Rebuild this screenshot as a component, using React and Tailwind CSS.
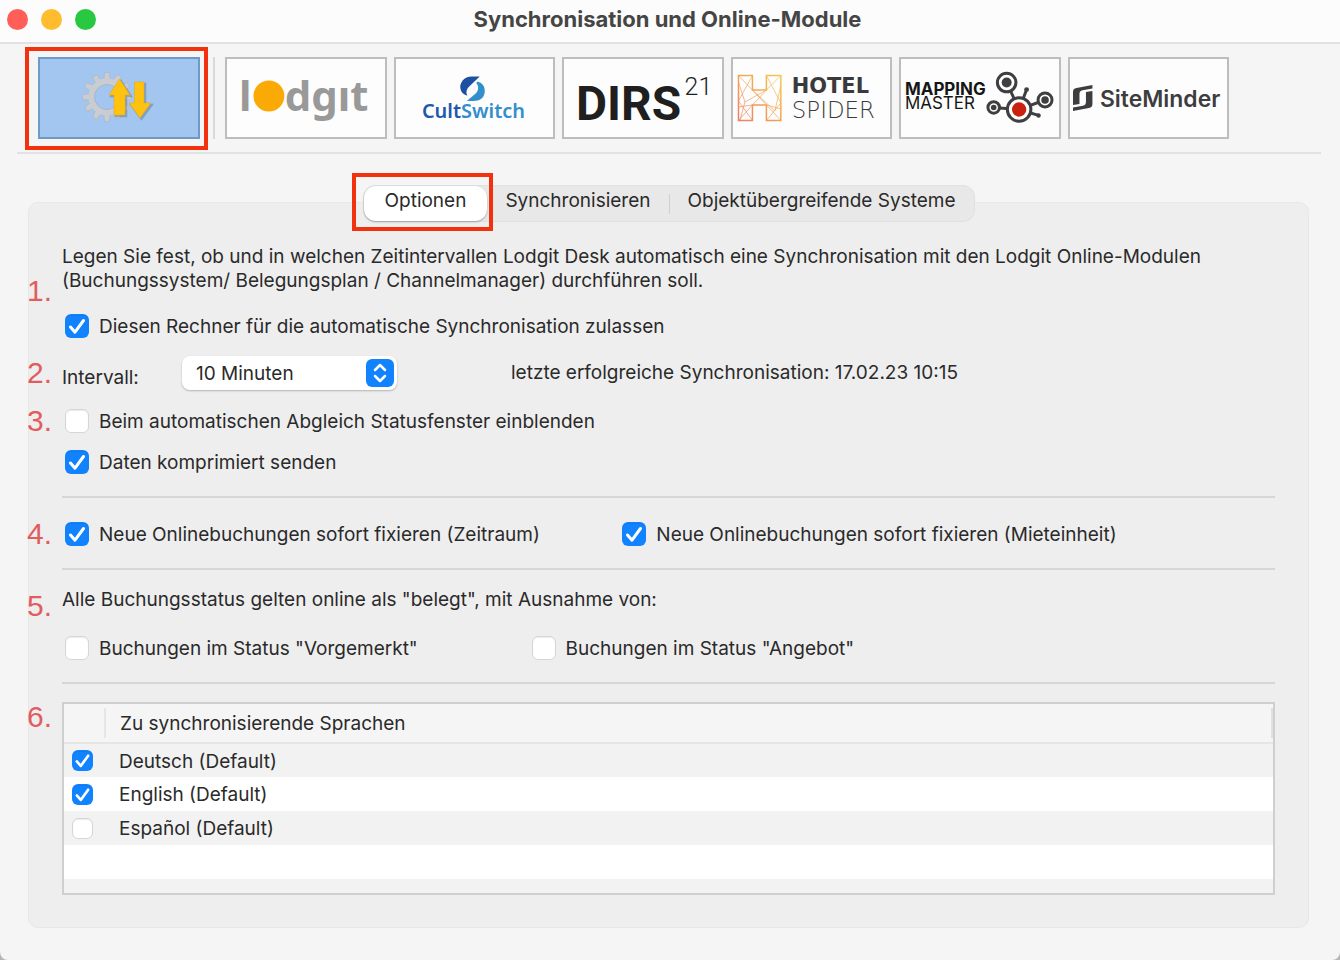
// Sync settings window: module toolbar, tab bar and the "Optionen" panel

import { useState } from 'react';

const LANGUAGES = [
  { id: 'de', name: 'Deutsch (Default)', active: true },
  { id: 'en', name: 'English (Default)', active: true },
  { id: 'es', name: 'Español (Default)', active: false },
];

const TABS = ['Optionen', 'Synchronisieren', 'Objektübergreifende Systeme'];

// Logos share one box, inside the 2px tile border
function Logo({ label, children }) {
  return (
    <svg viewBox="2 2 158 78" className="block h-full w-full" role="img" aria-label={label}>
      {children}
    </svg>
  );
}

function SyncLogo() {
  const teeth = [0, 30, 60, 90, 120, 150, 180, 210, 240, 270, 300, 330];
  const arrows = (
    <>
      <path d="M81.500 22 L92 38 H87 V58 H76 V38 H71 Z" />
      <path d="M96.500 25 H106 V46 H113 L102 61 L91 46 H96.500 Z" />
    </>
  );
  return (
    <Logo label="Synchronisation">
      <g fill="#c9ccd0" stroke="#a9b4c2" strokeWidth="0.6">
        {teeth.map((deg) => (
          <path key={deg} d="M65.800 23 L66.500 15.500 H71.500 L72.200 23 Z" transform={`rotate(${deg} 69 40)`} />
        ))}
      </g>
      <circle cx="69" cy="40" r="15.500" fill="none" stroke="#c9ccd0" strokeWidth="6" />
      <circle cx="69" cy="40" r="12.500" fill="none" stroke="#a3b1c4" strokeWidth="0.800" />
      <g fill="#4b5a6c" opacity="0.35" transform="translate(1.500 1.500)" stroke="#4b5a6c" strokeWidth="1.500">{arrows}</g>
      <g fill="#ffc20e" stroke="#e0a414" strokeWidth="0.500">{arrows}</g>
    </Logo>
  );
}

function LodgitLogo() {
  return (
    <Logo label="lodgit">
      <g fill="#999999" fontFamily="'Noto Sans', sans-serif" fontWeight="700" fontSize="42">
        <text x="14" y="54">l</text>
        <text x="60" y="54">dgıt</text>
      </g>
      <circle cx="44" cy="39" r="15.500" fill="#fba905" />
    </Logo>
  );
}

function CultSwitchLogo() {
  return (
    <Logo label="CultSwitch">
      <path d="M86 19.500 H78 C70 19.500 66 26 66.500 31 C67 35 69.500 37.500 73.500 38.800 C71.500 34 73.500 31 77 28 Z" fill="#1d4fa3" />
      <path d="M84 24.500 C89 26 91.500 30 91 35 C90.500 41 86 44 80 44 H73 L79 39 C84 35.500 86.500 31 82.500 26 Z" fill="#338fcb" />
      <text x="28" y="61" fontFamily="'Noto Sans', sans-serif" fontWeight="600" fontSize="20">
        <tspan fill="#2058ad">Cult</tspan>
        <tspan fill="#338fcb">Switch</tspan>
      </text>
    </Logo>
  );
}

function DirsLogo() {
  return (
    <Logo label="DIRS21">
      <g fill="#1f1f1f" fontFamily="Roboto, sans-serif">
        <text x="14" y="63" fontWeight="700" fontSize="48">DIRS</text>
        <text x="123" y="38" fontWeight="300" fontSize="25">21</text>
      </g>
    </Logo>
  );
}

function HotelSpiderLogo() {
  return (
    <Logo label="Hotel Spider">
      <defs>
        <linearGradient id="spider" x1="0" y1="1" x2="1" y2="0">
          <stop offset="0" stopColor="#ee7f63" />
          <stop offset="1" stopColor="#f5c84c" />
        </linearGradient>
      </defs>
      <g fill="none" stroke="url(#spider)">
        <path d="M7.500 18.500 H21.500 V33 H35.500 V18.500 H50 V63.500 H35.500 V48 H21.500 V63.500 H7.500 Z" strokeWidth="1.500" />
        <path
          d="M7.500 18.500 L21.500 33 L35.500 48 L50 63.500 M50 18.500 L35.500 33 L21.500 48 L7.500 63.500 M21.500 18.500 L7.500 44 L21.500 63.500 M35.500 18.500 L50 46 L35.500 63.500 M7.500 25 L14 45 L35.500 33 M21.500 33 L44 54 L50 28 M7.500 50 L21.500 48 M35.500 48 L50 52 M14 45 L9 63.500"
          strokeWidth="0.700"
        />
      </g>
      <g fill="#3a3a3c" fontFamily="'DejaVu Sans', sans-serif">
        <text x="61" y="36" fontWeight="700" fontSize="21">HOTEL</text>
        <text x="61" y="61" fontWeight="200" fontSize="23">SPIDER</text>
      </g>
    </Logo>
  );
}

function MappingMasterLogo() {
  return (
    <Logo label="Mapping Master">
      <g fill="#161616" fontFamily="Inter, sans-serif" fontSize="17">
        <text x="6" y="38" fontWeight="700">MAPPING</text>
        <text x="6" y="52">MASTER</text>
      </g>
      <g transform="translate(1 0)">
        <g stroke="#3f3f41" strokeWidth="3">
          <path d="M119.500 52.500 L107 25.500 M119.500 52.500 L145.500 43 M119.500 52.500 L94 50.500 M119.500 52.500 L127 32.500 M119.500 52.500 L139 58.500" />
          <circle cx="107" cy="25.500" r="9.300" fill="#fff" />
          <circle cx="145.500" cy="43" r="7" fill="#fff" />
          <circle cx="94" cy="50.500" r="5.800" fill="#fff" />
          <circle cx="119.500" cy="52.500" r="11.800" fill="#fff" />
        </g>
        <g fill="#3f3f41">
          <circle cx="107" cy="25.500" r="5" />
          <circle cx="145.500" cy="43" r="3.800" />
          <circle cx="94" cy="50.500" r="2.800" />
          <circle cx="127" cy="32.500" r="2.400" />
          <circle cx="139" cy="58.500" r="2.200" />
        </g>
        <circle cx="119.500" cy="52.500" r="7.200" fill="#c9210f" />
      </g>
    </Logo>
  );
}

function SiteMinderLogo() {
  const half = 'M5 48 V35 Q5 31.500 8.500 31 L24.500 28 V31.500 L14.500 33.300 Q11.500 34 11.500 37 V47 Z';
  return (
    <Logo label="SiteMinder">
      <g fill="#3d3d3f">
        <path d={half} />
        <path d={half} transform="rotate(180 14.75 41)" />
        <text x="32" y="50" fontFamily="Inter, sans-serif" fontWeight="600" fontSize="23">SiteMinder</text>
      </g>
    </Logo>
  );
}

const MODULES = [LodgitLogo, CultSwitchLogo, DirsLogo, HotelSpiderLogo, MappingMasterLogo, SiteMinderLogo];

// Red number that hangs in the margin, left of its row
function Marker({ children }) {
  return (
    <span className="absolute top-1/2 -left-[35px] -translate-y-1/2 font-['Liberation_Sans',sans-serif] text-[30px] leading-[30px] text-[#e25c5f]">
      {children}
    </span>
  );
}

function Check({ id, defaultChecked, small }) {
  return (
    <span className={`relative block shrink-0 ${small ? 'size-[21px]' : 'size-6'}`}>
      <input
        id={id}
        type="checkbox"
        defaultChecked={defaultChecked}
        className="peer block size-full appearance-none rounded-md border border-[#d6d6d6] bg-white shadow-[inset_0_1px_1px_rgba(0,0,0,0.08)] checked:border-transparent checked:bg-[#1283ff]"
      />
      <svg viewBox="0 0 24 24" className="pointer-events-none absolute inset-0 hidden size-full peer-checked:block" aria-hidden="true">
        <path d="M5.500 13 L10 18.200 L18.500 6.500" fill="none" stroke="#fff" strokeWidth="3" strokeLinecap="round" strokeLinejoin="round" />
      </svg>
    </span>
  );
}

function CheckRow({ id, defaultChecked, children }) {
  return (
    <div className="flex h-6 items-center gap-[10px] pl-[3px]">
      <Check id={id} defaultChecked={defaultChecked} />
      <label htmlFor={id} className="pt-0.5">{children}</label>
    </div>
  );
}

export default function App() {
  const [tab, setTab] = useState(TABS[0]);

  return (
    <div className="min-h-screen bg-[#b5b5b5] font-[Inter,sans-serif] text-[19px] leading-6 text-[#2a2a2a]">
      <div className="min-h-screen rounded-b-lg bg-[#f5f5f5]">
        {/* Title bar */}
        <header className="grid h-11 grid-cols-[1fr_auto_1fr] items-center border-b-2 border-[#e2e2e2] bg-[#fcfcfc] pr-[5px] pb-1">
          <div className="flex gap-[13px] pl-[7px]">
            <button type="button" aria-label="Schließen" className="size-[21px] rounded-full bg-[#ff5f57]" />
            <button type="button" aria-label="Minimieren" className="size-[21px] rounded-full bg-[#febc2e]" />
            <button type="button" aria-label="Maximieren" className="size-[21px] rounded-full bg-[#28c840]" />
          </div>
          <h1 className="text-[22px] font-bold text-[#454545]">Synchronisation und Online-Module</h1>
        </header>

        {/* Modules */}
        <nav className="mr-[19px] ml-[17px] flex border-b-2 border-[#e2e2e2] pt-[13px] pr-[92px] pb-[13px] pl-[21px]">
          <div className="relative mr-[13px] h-[82px] w-[162px] shrink-0">
            <button type="button" className="block h-full w-full border-2 border-[#6f9ac8] bg-[#a2c6ef]">
              <SyncLogo />
            </button>
            <span className="pointer-events-none absolute -top-[10px] -right-2 -bottom-[11px] -left-[13px] border-4 border-[#f2320e]" />
          </div>
          <div className="grid flex-1 grid-cols-6 gap-[7px] border-l-2 border-[#d9d9d9] pl-[10px]">
            {MODULES.map((Module, i) => (
              <button key={i} type="button" className="h-[82px] border-2 border-[#bdbdbd] bg-[#fdfdfd]">
                <Module />
              </button>
            ))}
          </div>
        </nav>

        <main className="pt-[31px] pr-[31px] pb-8 pl-7">
          {/* Tabs */}
          <div className="relative z-10 mx-auto flex h-[37px] w-fit rounded-xl border border-[#e0e0e0] bg-[#e8e8e8]" role="tablist">
            {TABS.map((name, i) => (
              <div key={name} className="relative flex items-center">
                {i === 2 && <span className="h-5 w-px bg-[#cfcfcf]" />}
                <button
                  type="button"
                  role="tab"
                  aria-selected={tab === name}
                  onClick={() => setTab(name)}
                  className={`h-full pb-[5px] ${i === 0 ? 'px-[21px]' : 'px-[18px]'} ${
                    tab === name ? 'rounded-xl bg-white shadow-[0_1px_2px_rgba(0,0,0,0.3)]' : ''
                  }`}
                >
                  {name}
                </button>
                {i === 0 && (
                  <span className="pointer-events-none absolute -top-[13px] -right-[6px] -bottom-[10px] -left-3 border-4 border-[#f2320e]" />
                )}
              </div>
            ))}
          </div>

          {/* Options */}
          <section className="-mt-5 rounded-[10px] border border-[#e7e7e7] bg-[#eeeeee] px-[33px] pt-[42px] pb-8">
            <p>
              Legen Sie fest, ob und in welchen Zeitintervallen Lodgit Desk automatisch eine Synchronisation mit den Lodgit Online-Modulen
              (Buchungssystem/ Belegungsplan / Channelmanager) durchführen soll.
            </p>

            <div className="relative">
              <span className="absolute -top-0.5 left-0"><Marker>1.</Marker></span>
              <div className="pt-[21px]">
                <CheckRow id="auto" defaultChecked>Diesen Rechner für die automatische Synchronisation zulassen</CheckRow>
              </div>
            </div>

            <div className="relative mt-[18px] flex items-center">
              <Marker>2.</Marker>
              <label htmlFor="interval" className="w-[120px] self-end">Intervall:</label>
              <div className="relative w-[215px]">
                <select
                  id="interval"
                  defaultValue="10"
                  className="block h-[34px] w-full appearance-none rounded-lg bg-white pt-0.5 pl-[14px] shadow-[0_1px_2px_rgba(0,0,0,0.25)]"
                >
                  <option value="5">5 Minuten</option>
                  <option value="10">10 Minuten</option>
                  <option value="30">30 Minuten</option>
                </select>
                <svg viewBox="0 0 28 28" className="pointer-events-none absolute top-[3px] right-[3px] size-7" aria-hidden="true">
                  <rect width="28" height="28" rx="6" fill="#1283ff" />
                  <path d="M9 11 L14 6 L19 11 M9 17 L14 22 L19 17" fill="none" stroke="#fff" strokeWidth="2.500" strokeLinecap="round" strokeLinejoin="round" />
                </svg>
              </div>
              <p className="ml-[114px]">letzte erfolgreiche Synchronisation: 17.02.23 10:15</p>
            </div>

            <div className="relative mt-[19px]">
              <Marker>3.</Marker>
              <CheckRow id="status">Beim automatischen Abgleich Statusfenster einblenden</CheckRow>
            </div>
            <div className="mt-[17px]">
              <CheckRow id="compress" defaultChecked>Daten komprimiert senden</CheckRow>
            </div>

            <hr className="mt-[22px] border-t-2 border-[#d6d6d6]" />

            <div className="relative mt-6 grid grid-cols-[17fr_20fr]">
              <Marker>4.</Marker>
              <CheckRow id="fix-period" defaultChecked>Neue Onlinebuchungen sofort fixieren (Zeitraum)</CheckRow>
              <CheckRow id="fix-unit" defaultChecked>Neue Onlinebuchungen sofort fixieren (Mieteinheit)</CheckRow>
            </div>

            <hr className="mt-[22px] border-t-2 border-[#d6d6d6]" />

            <div className="relative mt-[18px]">
              <span className="absolute top-[18px] left-0"><Marker>5.</Marker></span>
              <p>Alle Buchungsstatus gelten online als "belegt", mit Ausnahme von:</p>
            </div>
            <div className="mt-6 grid grid-cols-[5fr_8fr]">
              <CheckRow id="reserved">Buchungen im Status "Vorgemerkt"</CheckRow>
              <CheckRow id="offer">Buchungen im Status "Angebot"</CheckRow>
            </div>

            <hr className="mt-[22px] border-t-2 border-[#d6d6d6]" />

            <div className="relative mt-[18px] border-2 border-[#cfcfcf] bg-[#f2f2f2] pb-[14px]">
              <span className="absolute top-[13px] -left-0.5"><Marker>6.</Marker></span>
              <table className="w-full border-collapse text-left">
                <thead>
                  <tr className="h-[39px] border-b-2 border-[#e6e6e6] bg-[#f5f5f5]">
                    <th className="w-[42px] p-0" aria-label="Aktiv">
                      <span className="block h-[30px] border-r-2 border-[#e6e6e6]" />
                    </th>
                    <th className="p-0 font-normal">
                      <span className="block h-[30px] border-r-2 border-[#e0e0e0] pt-1 pl-[14px]">Zu synchronisierende Sprachen</span>
                    </th>
                  </tr>
                </thead>
                <tbody>
                  {LANGUAGES.map((lang) => (
                    <tr key={lang.id} className="h-[34px] odd:bg-[#f2f2f2] even:bg-white">
                      <td className="p-0 pl-2"><Check id={lang.id} defaultChecked={lang.active} small /></td>
                      <td className="p-0 pl-[13px]"><label htmlFor={lang.id} className="block pt-0.5">{lang.name}</label></td>
                    </tr>
                  ))}
                  <tr className="h-[34px] bg-white">
                    <td colSpan={2} />
                  </tr>
                </tbody>
              </table>
            </div>
          </section>
        </main>
      </div>
    </div>
  );
}
